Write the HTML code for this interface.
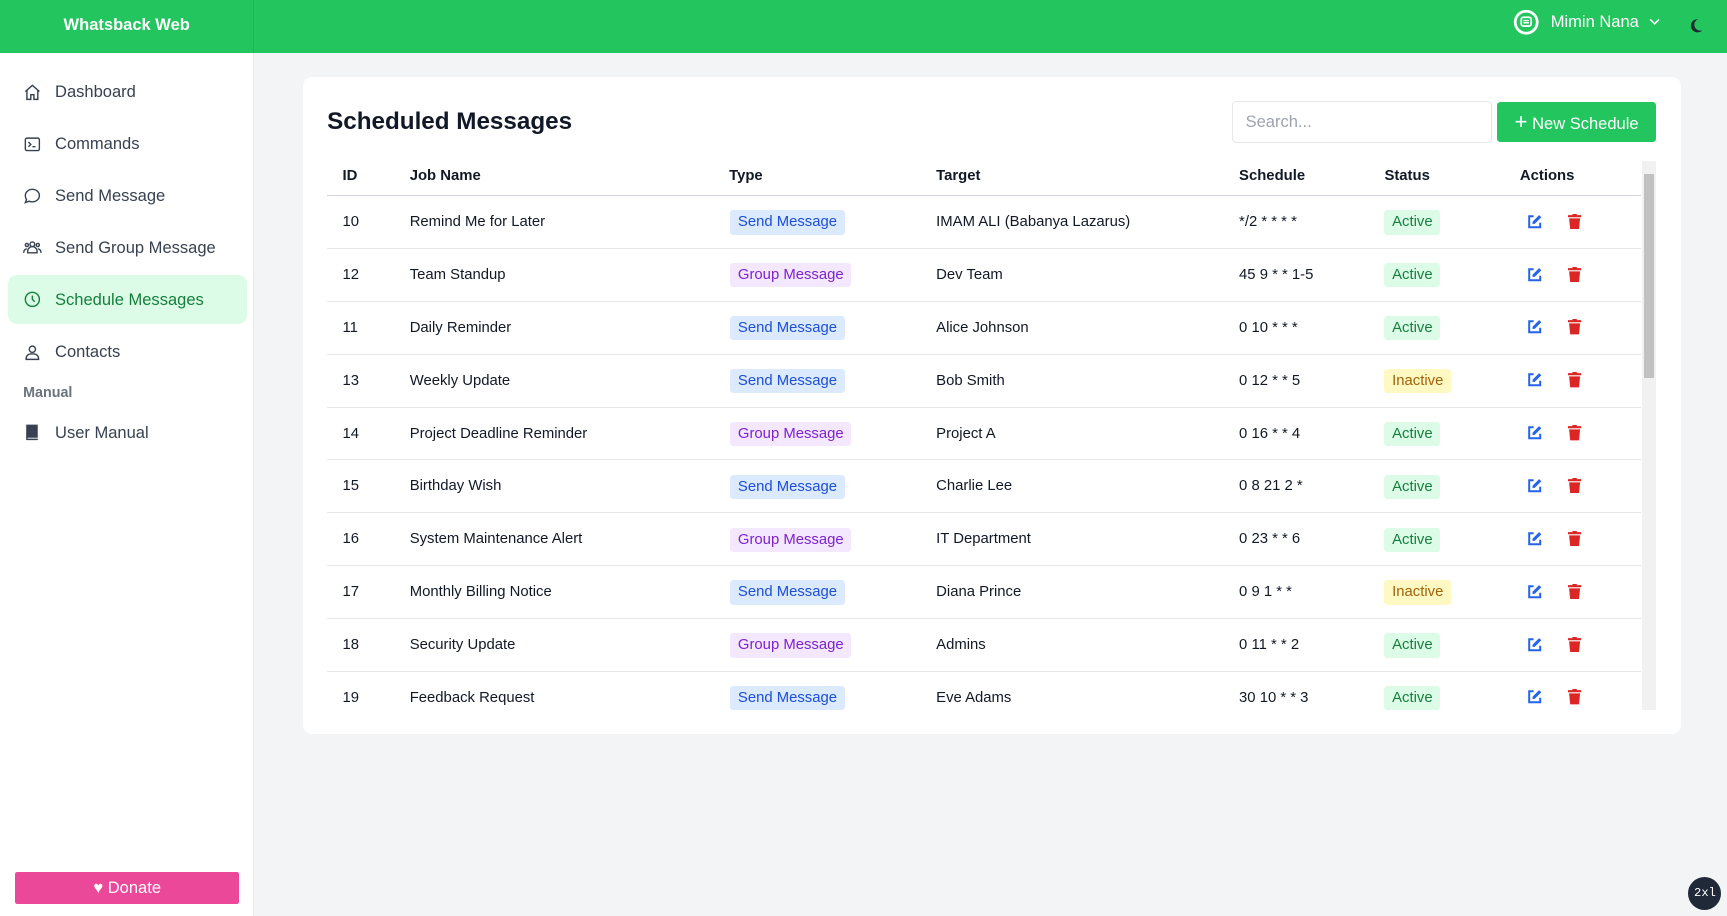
<!DOCTYPE html>
<html><head><meta charset="utf-8"><style>
html{zoom:1.10140}
*{box-sizing:border-box;margin:0;padding:0}
body{width:1568px;height:832px;overflow:hidden;background:#f3f4f6;font-family:"Liberation Sans",sans-serif;position:relative;color:#111827}
.top{position:absolute;left:0;top:0;width:1568px;height:48px;background:#22c55e}
.brand{position:absolute;left:0;top:0;width:231px;height:48px;color:#fff;font-weight:bold;font-size:15px;text-align:center;line-height:45px;border-right:1px solid #21b457}
.user{position:absolute;left:1374px;top:8px;display:flex;align-items:center;color:#fff;font-size:15px}
.side{position:absolute;left:0;top:48px;width:231px;height:784px;background:#fff;border-right:1px solid #e5e7eb}
.nav{position:absolute;left:7px;width:217px;height:44px;display:flex;align-items:center;padding-left:14px;font-size:15px;color:#374151;border-radius:8px}
.nav svg{width:17px;height:17px;margin-right:12px;fill:none;stroke:#374151;stroke-width:1.8}
.nav.act{background:#dcfce7;color:#15803d}.nav.act svg{stroke:#15803d}
.donate{position:absolute;left:14px;top:744px;width:203px;height:29px;background:#ec4899;color:#fff;font-size:15px;text-align:center;line-height:29px;border-radius:2px}
.card{position:absolute;left:275px;top:70px;width:1251px;height:596px;background:#fff;border-radius:8px}
h1{position:absolute;left:22px;top:28px;font-size:22px;font-weight:bold}
.search{position:absolute;left:844px;top:22px;width:236px;height:38px;border:1px solid #e5e7eb;border-radius:4px;padding-left:11px;line-height:36px;color:#9ca3af;font-size:15px}
.btn{position:absolute;left:1084px;top:23px;width:145px;height:36px;background:#22c55e;border-radius:3px;color:#fff;font-size:15px;line-height:36px;text-align:center}
.tbl{position:absolute;left:22px;top:76px;width:1193px;height:499px;overflow:hidden}
.row{position:absolute;left:0;width:1193px;height:48px;border-bottom:1px solid #e5e7eb;font-size:13.5px}
.row span{position:absolute;top:0;line-height:48px}
.hd span{font-weight:bold;line-height:28px}
.row span.pill{top:13px;height:22px;line-height:22px;padding:0 7px;border-radius:3px;font-size:13.5px}
.sm{background:#dbeafe;color:#1d4ed8}.gm{background:#f3e8ff;color:#7e22ce}
.ac{background:#dcfce7;color:#15803d}.in{background:#fef9c3;color:#a16207}
.sb{position:absolute;left:1216px;top:76px;width:13px;height:499px;background:#f1f1f1}
.sb div{position:absolute;left:2px;top:12px;width:9px;height:185px;background:#c1c1c1}
</style></head><body>
<div class="top"><div class="brand">Whatsback Web</div>
<div class="user"><svg width="24" height="24" viewBox="0 0 24 24"><circle cx="12" cy="12" r="10" fill="none" stroke="#fff" stroke-width="2.5"/><rect x="7.5" y="7.5" width="9" height="8" rx="2" fill="none" stroke="#fff" stroke-width="1.6"/><path d="M9.5 10.5h5M9.5 12.5h5" stroke="#fff" stroke-width="1.3"/></svg><span style="margin-left:10px">Mimin Nana</span><svg width="12" height="12" viewBox="0 0 12 12" style="margin-left:8px"><path d="M2 4l4 4 4-4" fill="none" stroke="#fff" stroke-width="1.4"/></svg></div>
<svg style="position:absolute;left:1532px;top:15px" width="16" height="16" viewBox="0 0 16 16"><path d="M10 2a6 6 0 1 0 4 10A5 5 0 0 1 10 2z" fill="#1f2937"/></svg>
</div>
<div class="side">
<div class="nav" style="top:14px"><svg viewBox="0 0 24 24"><path d="M3 11l9-8 9 8M5 9v12h5v-6h4v6h5V9"/></svg>Dashboard</div>
<div class="nav" style="top:61px"><svg viewBox="0 0 24 24"><rect x="3" y="4" width="18" height="16" rx="2"/><path d="M7 9l3 3-3 3M12 15h4"/></svg>Commands</div>
<div class="nav" style="top:108px"><svg viewBox="0 0 24 24"><path d="M12 3c5 0 9 3.6 9 8s-4 8-9 8c-1.5 0-3-.3-4-.8L3 20l1.5-4A8 8 0 0 1 3 11c0-4.4 4-8 9-8z"/><path d="M8 11h.1M12 11h.1M16 11h.1"/></svg>Send Message</div>
<div class="nav" style="top:155px"><svg viewBox="0 0 24 24"><circle cx="12" cy="8" r="3"/><circle cx="5" cy="9" r="2"/><circle cx="19" cy="9" r="2"/><path d="M6 19v-2a6 6 0 0 1 12 0v2zM1 19v-1a4 4 0 0 1 4-4M23 19v-1a4 4 0 0 0-4-4"/></svg>Send Group Message</div>
<div class="nav act" style="top:202px"><svg viewBox="0 0 24 24"><circle cx="12" cy="12" r="9"/><path d="M12 7v5l3 3"/></svg>Schedule Messages</div>
<div class="nav" style="top:250px"><svg viewBox="0 0 24 24"><circle cx="12" cy="8" r="4"/><path d="M4 21v-1a6 6 0 0 1 6-6h4a6 6 0 0 1 6 6v1z"/></svg>Contacts</div>
<div style="position:absolute;left:21px;top:302px;font-size:13px;font-weight:bold;color:#6b7280">Manual</div>
<div class="nav" style="top:323px"><svg viewBox="0 0 24 24"><path d="M5 3h13v15H5z" fill="#374151"/><path d="M5 18v3h14" /></svg>User Manual</div>
<div class="donate">♥ Donate</div>
</div>
<div class="card">
<h1>Scheduled Messages</h1>
<div class="search">Search...</div>
<div class="btn"><b style="font-size:20px;font-weight:normal">+</b> New Schedule</div>
<div class="tbl" id="t">
<div class="row hd" style="top:0;height:32px;border-bottom:1px solid #d1d5db"><span style="left:14px">ID</span><span style="left:75px">Job Name</span><span style="left:365px">Type</span><span style="left:553px">Target</span><span style="left:828px">Schedule</span><span style="left:960px">Status</span><span style="left:1083px">Actions</span></div>
</div>
<div class="sb"><div></div></div>
</div>
<div style="position:absolute;left:1533px;top:796px;width:30px;height:30px;border-radius:50%;background:#1f2937;color:#fff;font-size:11px;text-align:center;line-height:30px;font-family:'Liberation Mono',monospace">2xl</div>
<script>
var d=[["10","Remind Me for Later",0,"IMAM ALI (Babanya Lazarus)","*/2 * * * *",1],["12","Team Standup",1,"Dev Team","45 9 * * 1-5",1],["11","Daily Reminder",0,"Alice Johnson","0 10 * * *",1],["13","Weekly Update",0,"Bob Smith","0 12 * * 5",0],["14","Project Deadline Reminder",1,"Project A","0 16 * * 4",1],["15","Birthday Wish",0,"Charlie Lee","0 8 21 2 *",1],["16","System Maintenance Alert",1,"IT Department","0 23 * * 6",1],["17","Monthly Billing Notice",0,"Diana Prince","0 9 1 * *",0],["18","Security Update",1,"Admins","0 11 * * 2",1],["19","Feedback Request",0,"Eve Adams","30 10 * * 3",1]];
var h="";d.forEach(function(r,i){h+='<div class="row" style="top:'+(32+i*48)+'px"><span style="left:14px">'+r[0]+'</span><span style="left:75px">'+r[1]+'</span><span class="pill '+(r[2]?'gm':'sm')+'" style="left:366px">'+(r[2]?'Group Message':'Send Message')+'</span><span style="left:553px">'+r[3]+'</span><span style="left:828px">'+r[4]+'</span><span class="pill '+(r[5]?'ac':'in')+'" style="left:960px">'+(r[5]?'Active':'Inactive')+'</span><span style="left:1089px;top:16px;line-height:0"><svg width="14" height="14" viewBox="0 0 14 14"><path d="M6 2H2v10h10V8" fill="none" stroke="#2563eb" stroke-width="1.8"/><path d="M11 1l2 2-6 6H5V7z" fill="#2563eb"/></svg></span><span style="left:1127px;top:16px;line-height:0"><svg width="12" height="14" viewBox="0 0 12 14"><path d="M4 0h4v1h4v2H0V1h4zM1 4h10l-1 10H2z" fill="#dc2626"/></svg></span></div>'});
document.getElementById("t").innerHTML+=h;
</script>
</body></html>
